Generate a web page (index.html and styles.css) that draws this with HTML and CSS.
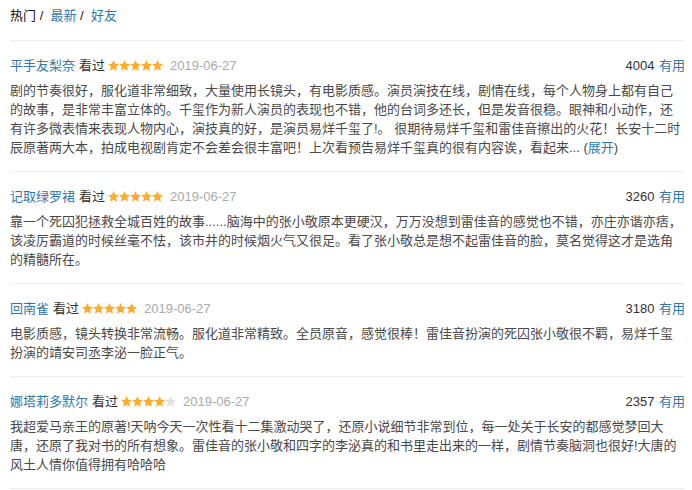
FILE: index.html
```html
<!DOCTYPE html>
<html lang="zh-CN">
<head>
<meta charset="utf-8">
<title>短评</title>
<link rel="stylesheet" href="styles.css">
</head>
<body>
<svg class="defs" width="0" height="0" aria-hidden="true">
  <defs>
    <symbol id="star" viewBox="0 0 11 11">
      <polygon points="5.5,0.1 7.15,3.75 11,4.1 8.1,6.75 8.95,10.8 5.5,8.75 2.05,10.8 2.9,6.75 0,4.1 3.85,3.75"/>
    </symbol>
  </defs>
</svg>
<div class="page">
  <div class="tabs"><span class="tab-cur">热门</span>&nbsp;/&nbsp; <a class="link">最新</a>&nbsp;/&nbsp; <a class="link">好友</a></div>
  <div class="list">
    <div class="item">
      <div class="meta">
        <a class="link name">平手友梨奈</a>
        <span class="status">看过</span>
        <svg class="stars" width="55" height="11" viewBox="0 0 55 11"><use href="#star" x="0" width="11" height="11" class="on"/><use href="#star" x="11" width="11" height="11" class="on"/><use href="#star" x="22" width="11" height="11" class="on"/><use href="#star" x="33" width="11" height="11" class="on"/><use href="#star" x="44" width="11" height="11" class="on"/></svg>
        <span class="date">2019-06-27</span>
        <span class="votes"><span class="count">4004</span> <a class="link">有用</a></span>
      </div>
      <p class="text">剧的节奏很好，服化道非常细致，大量使用长镜头，有电影质感。演员演技在线，剧情在线，每个人物身上都有自己的故事，是非常丰富立体的。千玺作为新人演员的表现也不错，他的台词多还长，但是发音很稳。眼神和小动作，还有许多微表情来表现人物内心，演技真的好，是演员易烊千玺了!。 很期待易烊千玺和雷佳音擦出的火花！长安十二时辰原著两大本，拍成电视剧肯定不会差会很丰富吧！上次看预告易烊千玺真的很有内容诶，看起来... (<a class="link">展开</a>)</p>
    </div>
    <div class="item">
      <div class="meta">
        <a class="link name">记取绿罗裙</a>
        <span class="status">看过</span>
        <svg class="stars" width="55" height="11" viewBox="0 0 55 11"><use href="#star" x="0" width="11" height="11" class="on"/><use href="#star" x="11" width="11" height="11" class="on"/><use href="#star" x="22" width="11" height="11" class="on"/><use href="#star" x="33" width="11" height="11" class="on"/><use href="#star" x="44" width="11" height="11" class="on"/></svg>
        <span class="date">2019-06-27</span>
        <span class="votes"><span class="count">3260</span> <a class="link">有用</a></span>
      </div>
      <p class="text">靠一个死囚犯拯救全城百姓的故事......脑海中的张小敬原本更硬汉，万万没想到雷佳音的感觉也不错，亦庄亦谐亦痞，该凌厉霸道的时候丝毫不怯，该市井的时候烟火气又很足。看了张小敬总是想不起雷佳音的脸，莫名觉得这才是选角的精髓所在。</p>
    </div>
    <div class="item">
      <div class="meta">
        <a class="link name">回南雀</a>
        <span class="status">看过</span>
        <svg class="stars" width="55" height="11" viewBox="0 0 55 11"><use href="#star" x="0" width="11" height="11" class="on"/><use href="#star" x="11" width="11" height="11" class="on"/><use href="#star" x="22" width="11" height="11" class="on"/><use href="#star" x="33" width="11" height="11" class="on"/><use href="#star" x="44" width="11" height="11" class="on"/></svg>
        <span class="date">2019-06-27</span>
        <span class="votes"><span class="count">3180</span> <a class="link">有用</a></span>
      </div>
      <p class="text">电影质感，镜头转换非常流畅。服化道非常精致。全员原音，感觉很棒！雷佳音扮演的死囚张小敬很不羁，易烊千玺扮演的靖安司丞李泌一脸正气。</p>
    </div>
    <div class="item">
      <div class="meta">
        <a class="link name">娜塔莉多默尔</a>
        <span class="status">看过</span>
        <svg class="stars" width="55" height="11" viewBox="0 0 55 11"><use href="#star" x="0" width="11" height="11" class="on"/><use href="#star" x="11" width="11" height="11" class="on"/><use href="#star" x="22" width="11" height="11" class="on"/><use href="#star" x="33" width="11" height="11" class="on"/><use href="#star" x="44" width="11" height="11" class="off"/></svg>
        <span class="date">2019-06-27</span>
        <span class="votes"><span class="count">2357</span> <a class="link">有用</a></span>
      </div>
      <p class="text">我超爱马亲王的原著!天呐今天一次性看十二集激动哭了，还原小说细节非常到位，每一处关于长安的都感觉梦回大唐，还原了我对书的所有想象。雷佳音的张小敬和四字的李泌真的和书里走出来的一样，剧情节奏脑洞也很好!大唐的风土人情你值得拥有哈哈哈</p>
    </div>
  </div>
</div>
</body>
</html>
```

FILE: styles.css
```css
* {
  box-sizing: border-box;
}

html, body {
  margin: 0;
  padding: 0;
  background: #ffffff;
}

body {
  font-family: "Liberation Sans", "Noto Sans CJK SC", sans-serif;
  font-size: 13px;
  line-height: 19px;
  color: #494949;
}

.defs {
  position: absolute;
  width: 0;
  height: 0;
  overflow: hidden;
}

.page {
  padding: 6px 7px 0 10px;
}

.link {
  color: #3377aa;
  text-decoration: none;
}

.tabs {
  color: #111111;
  padding-bottom: 15px;
  border-bottom: 1px solid #ececec;
}

.tab-cur {
  color: #111111;
}

.item {
  padding: 15px 0 14px;
  border-bottom: 1px solid #ececec;
}

.meta {
  display: flex;
  align-items: center;
  height: 19px;
  margin-bottom: 6px;
}

.status {
  margin-left: 4px;
  color: #333333;
}

.stars {
  margin-left: 3px;
  display: block;
}

.stars .on {
  fill: #ffac2d;
}

.stars .off {
  fill: #e1e1e1;
}

.date {
  margin-left: 7px;
  color: #aaaaaa;
}

.votes {
  margin-left: auto;
  color: #333333;
}

.count {
  margin-right: 1px;
}

.text {
  margin: 0;
  color: #494949;
}
```
